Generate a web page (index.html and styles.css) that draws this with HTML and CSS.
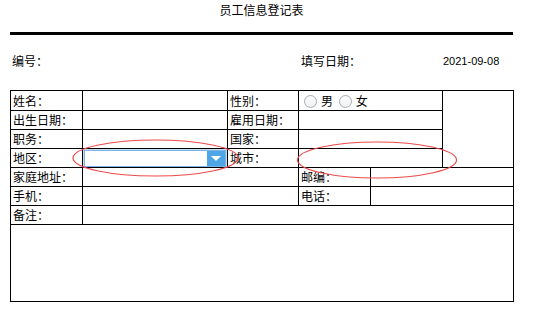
FILE: index.html
```html
<!DOCTYPE html>
<html lang="zh-CN">
<head>
  <meta charset="UTF-8">
  <meta name="viewport" content="width=device-width, initial-scale=1">
  <title>员工信息登记表</title>
  <link rel="stylesheet" href="styles.css">
</head>
<body>
  <div class="sheet">
    <h1 class="title">员工信息登记表</h1>
    <div class="rule"></div>

    <!-- 表头信息 -->
    <div class="meta">
      <span class="meta-label">编号：</span>
      <span class="meta-label">填写日期：</span>
      <span class="meta-date">2021-09-08</span>
    </div>

    <!-- 登记表格 -->
    <table class="form">
      <colgroup>
        <col style="width:72px">
        <col style="width:145px">
        <col style="width:71px">
        <col style="width:72px">
        <col style="width:72px">
        <col style="width:71px">
      </colgroup>
      <tr class="first">
        <td>姓名：</td>
        <td></td>
        <td>性别：</td>
        <td colspan="2">
          <span class="radio"></span><span class="radio-text">男</span>
          <span class="radio"></span><span class="radio-text">女</span>
        </td>
        <td rowspan="4"></td>
      </tr>
      <tr>
        <td>出生日期：</td>
        <td></td>
        <td>雇用日期：</td>
        <td colspan="2"></td>
      </tr>
      <tr>
        <td>职务：</td>
        <td></td>
        <td>国家：</td>
        <td colspan="2"></td>
      </tr>
      <tr>
        <td>地区：</td>
        <td class="combo-cell">
          <div class="combo">
            <div class="combo-input"></div>
            <div class="combo-btn"><span class="arrow"></span></div>
          </div>
        </td>
        <td>城市：</td>
        <td colspan="2"></td>
      </tr>
      <tr>
        <td>家庭地址：</td>
        <td colspan="2"></td>
        <td>邮编：</td>
        <td colspan="2"></td>
      </tr>
      <tr>
        <td>手机：</td>
        <td colspan="2"></td>
        <td>电话：</td>
        <td colspan="2"></td>
      </tr>
      <tr>
        <td>备注：</td>
        <td colspan="5"></td>
      </tr>
      <tr class="notes">
        <td colspan="6"></td>
      </tr>
    </table>

    <!-- 红色标注圈 -->
    <svg class="marks" width="533" height="312" viewBox="0 0 533 312">
      <ellipse cx="155.5" cy="158" rx="82.5" ry="18" />
      <ellipse cx="377" cy="160" rx="79.5" ry="18" />
    </svg>
  </div>
</body>
</html>
```

FILE: styles.css
```css
/* 基本样式 */
body {
  margin: 0;
  background: #fff;
  color: #000;
  font-family: "Noto Sans CJK SC", "Liberation Sans", sans-serif;
  font-size: 12px;
}

.sheet {
  position: relative;
  width: 503px;
  height: 312px;
  padding-left: 10px;
}

.title {
  margin: 0;
  padding-top: 2px;
  font-size: 12px;
  font-weight: normal;
  line-height: 16px;
  text-align: center;
}

.rule {
  margin-top: 14px;
  height: 3px;
  background: #000;
}

/* 表头信息 */
.meta {
  display: grid;
  grid-template-columns: 289px 142px auto;
  margin-top: 18px;
  padding-left: 2px;
  line-height: 16px;
}

.meta-date {
  font-family: "Liberation Sans", sans-serif;
  font-size: 11px;
}

/* 表格 */
.form {
  margin-top: 21px;
  width: 504px;
  table-layout: fixed;
  border-collapse: collapse;
}

.form td {
  border: 1px solid #000;
  height: 18px;
  padding: 0 2px;
  line-height: 16px;
  white-space: nowrap;
  overflow: hidden;
}

.form tr.first td {
  height: 19px;
}

.form tr.notes td {
  height: 76px;
}

/* 单选按钮 */
.radio {
  display: inline-block;
  vertical-align: -2px;
  width: 11px;
  height: 11px;
  margin-left: 3px;
  border: 1px solid #a8acb0;
  border-radius: 50%;
  background: linear-gradient(#fdfdfd, #eef0f2);
}

.radio-text {
  margin-left: 4px;
}

/* 下拉框 */
.form td.combo-cell {
  padding: 0;
}

.combo {
  display: flex;
  height: 15px;
  margin: 0 1px;
  border: 1px solid #7db3e6;
  box-shadow: 0 0 0 2px #c6def2;
  background: #fff;
}

.combo-input {
  flex: 1;
}

.combo-btn {
  width: 18px;
  background: #4ea6e6;
  display: flex;
  align-items: center;
  justify-content: center;
}

.arrow {
  width: 0;
  height: 0;
  border-left: 5px solid transparent;
  border-right: 5px solid transparent;
  border-top: 5px solid #fff;
}

/* 红色标注 */
.marks {
  position: absolute;
  left: 0;
  top: 0;
  pointer-events: none;
}

.marks ellipse {
  fill: none;
  stroke: #ec4b4b;
  stroke-width: 1.2;
}
```
